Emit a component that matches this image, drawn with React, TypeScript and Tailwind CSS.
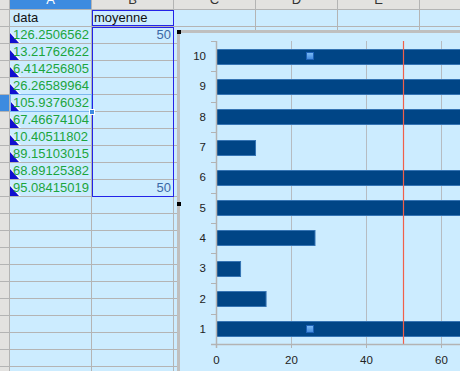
import React from 'react';

const values = [
  '126.2506562',
  '13.21762622',
  '6.414256805',
  '26.26589964',
  '105.9376032',
  '67.46674104',
  '10.40511802',
  '89.15103015',
  '68.89125382',
  '95.08415019',
];

const columns = ['A', 'B', 'C', 'D', 'E'];
const ROW_COUNT = 22;

function Triangle() {
  return (
    <svg className="absolute left-0 bottom-0" width="11" height="11" viewBox="0 0 11 11">
      <polygon points="0,0 0,11 11,11" fill="#ffffff" />
      <polygon points="0,1 0,11 9,11" fill="#1010d0" />
    </svg>
  );
}

function SheetRow({ index }: { index: number }) {
  const value = index >= 1 && index <= 10 ? values[index - 1] : null;
  const isCursorRow = index === 5;
  return (
    <div className="flex h-[17px] border-b border-[#b4b4b4]">
      <div
        className={`w-[10px] shrink-0 border-r border-[#b4b4b4] ${
          isCursorRow ? 'bg-[#3d8be0]' : 'bg-[#e3e2e0]'
        }`}
      />
      <div className="relative w-[82px] shrink-0 border-r border-[#b4b4b4] pl-[3px] leading-[16px]">
        {index === 0 && <span className="text-[#111]">data</span>}
        {value && (
          <>
            <Triangle />
            <span className="relative text-[#1ba53d]">{value}</span>
          </>
        )}
      </div>
      <div className="w-[82px] shrink-0 border-r border-[#b4b4b4] pr-[2px] text-right leading-[16px]">
        {index === 0 && <span className="block text-left pl-[2px] text-[#111]">moyenne</span>}
        {(index === 1 || index === 10) && <span className="text-[#3a68a6]">50</span>}
      </div>
      <div className="w-[82px] shrink-0 border-r border-[#b4b4b4]" />
      <div className="w-[82px] shrink-0 border-r border-[#b4b4b4]" />
      <div className="w-[82px] shrink-0 border-r border-[#b4b4b4]" />
      <div className="flex-1" />
    </div>
  );
}

function BarChart() {
  const data = values.map(v => parseFloat(v));
  const x0 = 216;
  const scale = 3.75;
  const top = 41;
  const bottom = 344;
  const catH = (bottom - top) / 10;
  const center = (k: number) => bottom - (k + 0.5) * catH;
  const grid = [0, 20, 40, 60];

  return (
    <svg width="280" height="338" viewBox="180 33 280 338" className="block">
      {grid.slice(1).map(g => (
        <line key={g} x1={x0 + g * scale + 0.5} y1={top} x2={x0 + g * scale + 0.5} y2={bottom} stroke="#b6bcc2" strokeWidth="1" />
      ))}
      {data.map((v, k) => {
        const cy = center(k);
        return (
          <rect
            key={k}
            x={x0 + 0.5}
            y={Math.round(cy - 7.5) + 0.5}
            width={v * scale}
            height={15}
            fill="#004586"
            stroke="#3574b4"
            strokeWidth="1"
          />
        );
      })}
      <line x1={403.5} y1={top} x2={403.5} y2={bottom} stroke="#f0604a" strokeWidth="1.2" />
      {/* axes */}
      <line x1={x0 + 0.5} y1={top} x2={x0 + 0.5} y2={bottom + 4} stroke="#b3b3b3" strokeWidth="1.5" />
      <line x1={211} y1={bottom + 0.5} x2={460} y2={bottom + 0.5} stroke="#b3b3b3" strokeWidth="1.5" />
      {Array.from({ length: 11 }).map((_, i) => {
        const y = Math.round(top + i * catH) + 0.5;
        return <line key={i} x1={211} y1={y} x2={x0} y2={y} stroke="#b3b3b3" strokeWidth="1" />;
      })}
      {grid.map(g => (
        <line key={g} x1={x0 + g * scale + 0.5} y1={bottom} x2={x0 + g * scale + 0.5} y2={bottom + 4} stroke="#b3b3b3" strokeWidth="1" />
      ))}
      {data.map((_, k) => (
        <text
          key={k}
          x={206}
          y={center(k) + 4}
          textAnchor="end"
          fontFamily="'Liberation Sans', Arial, sans-serif"
          fontSize="11.5"
          fill="#222"
        >
          {k + 1}
        </text>
      ))}
      {grid.map(g => (
        <text
          key={g}
          x={x0 + g * scale + 0.5}
          y={364}
          textAnchor="middle"
          fontFamily="'Liberation Sans', Arial, sans-serif"
          fontSize="11.5"
          fill="#222"
        >
          {g}
        </text>
      ))}
      {[center(9), center(0)].map((cy, i) => (
        <g key={i}>
          <defs>
            <linearGradient id={`h${i}`} x1="0" y1="0" x2="0" y2="1">
              <stop offset="0" stopColor="#7fbcf5" />
              <stop offset="1" stopColor="#3f88dc" />
            </linearGradient>
          </defs>
          <rect x={306.5} y={Math.round(cy) - 3.5} width={7} height={7} fill={`url(#h${i})`} stroke="#1d62b8" strokeWidth="1" />
        </g>
      ))}
    </svg>
  );
}

export default function App() {
  return (
    <div className="relative w-[460px] h-[371px] overflow-hidden bg-[#ccecff] text-[13px] font-['Liberation_Sans',Arial,sans-serif]">
      {/* column headers */}
      <div className="flex h-[10px] border-b border-[#b4b4b4] bg-[#e3e2e0] overflow-hidden">
        <div className="w-[10px] shrink-0 border-r border-[#b4b4b4]" />
        {columns.map((c, i) => (
          <div
            key={c}
            className={`flex items-end justify-center shrink-0 w-[82px] border-r border-[#b4b4b4] ${
              i === 0 ? 'bg-[#3d8be0] text-white' : 'text-[#333]'
            }`}
          >
            <span className="leading-[13px] mb-[3px]">{c}</span>
          </div>
        ))}
        <div className="flex-1" />
      </div>

      {Array.from({ length: ROW_COUNT }).map((_, i) => (
        <SheetRow key={i} index={i} />
      ))}

      {/* selection and cursor */}
      <div className="absolute left-[92px] top-[10px] w-[82px] h-[16px] border border-[#2323e8]" />
      <div className="absolute left-[92px] top-[27px] w-[82px] h-[170px] border border-[#2323e8]" />
      <div className="absolute left-[10px] top-[94px] w-[82px] h-[18px] border border-[#7db8ee]" />
      <div className="absolute left-[89px] top-[109px] w-[6px] h-[6px] bg-[#3d8be0] border border-white" />

      {/* embedded chart */}
      <div className="absolute left-[177px] top-[30px] right-0 bottom-0 border-l-[3px] border-t-[3px] border-[#bfbfbf] bg-[#ccecff]">
        <BarChart />
      </div>
      <div className="absolute left-[177px] top-[30px] w-[4px] h-[4px] bg-black" />
      <div className="absolute left-[177px] top-[202px] w-[4px] h-[4px] bg-black" />
    </div>
  );
}
